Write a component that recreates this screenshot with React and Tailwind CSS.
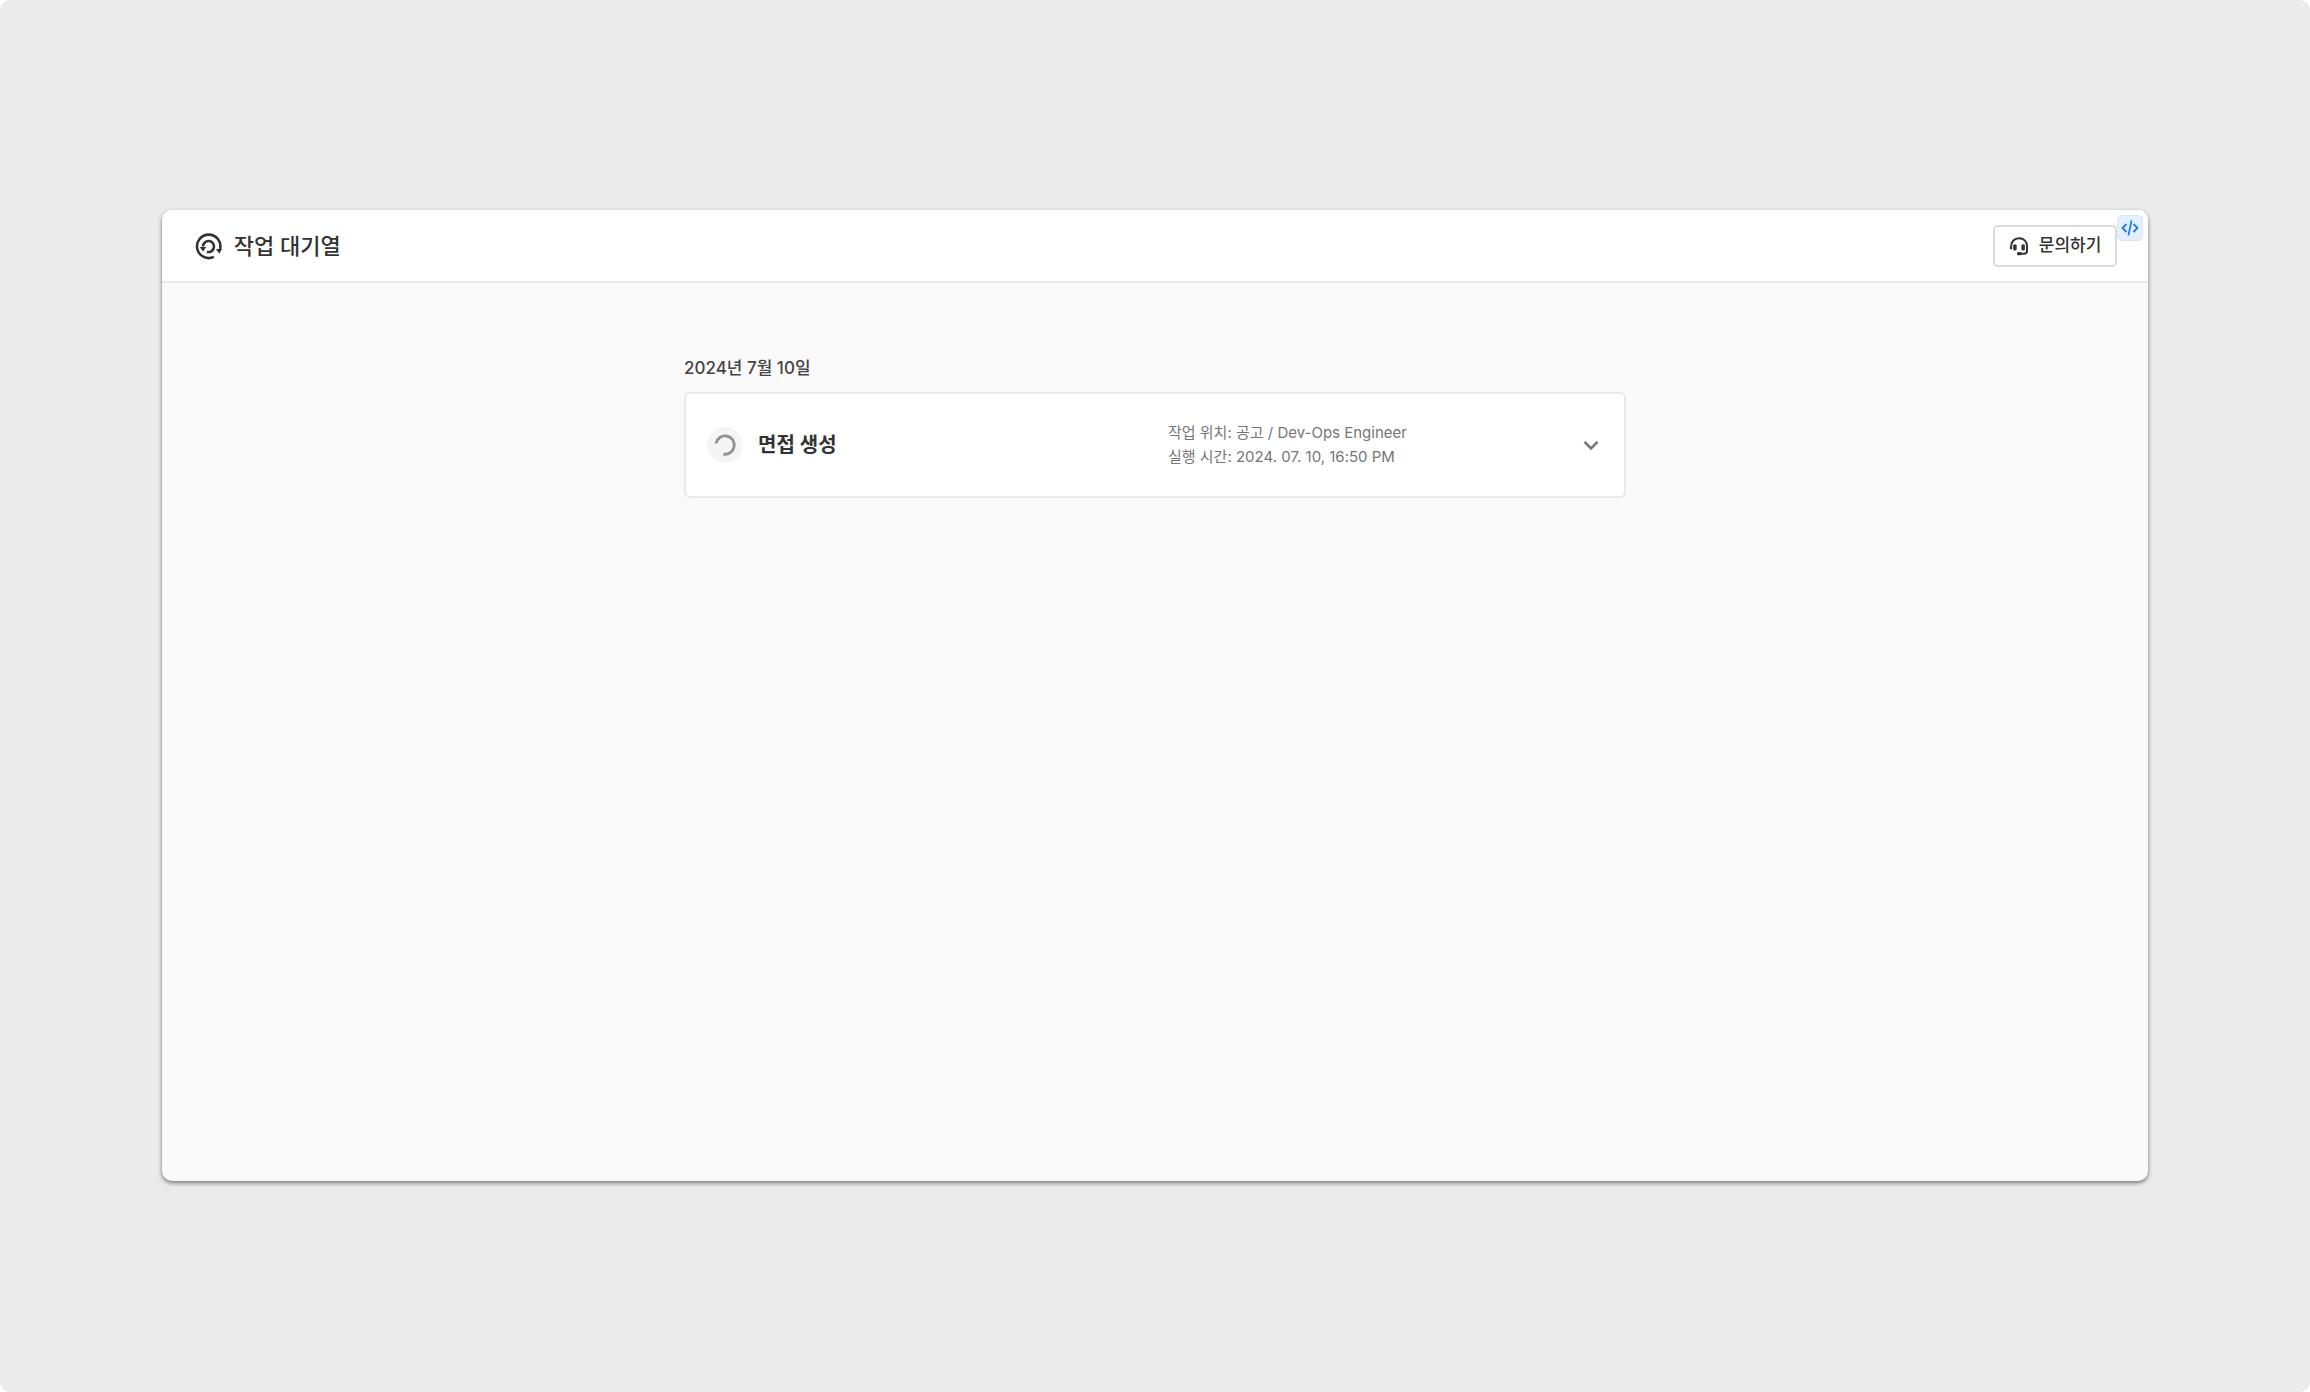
const FONT = "font-['Inter','Noto_Sans_CJK_KR',sans-serif]";

function QueueIcon() {
  return (
    <svg viewBox="0 0 28 28" className="size-7 text-[#333333]" fill="none" stroke="currentColor" strokeWidth="2.6" aria-hidden="true">
      <path d="M19.9 24.8A11.7 11.7 0 1 1 26.1 17" />
      <path d="M21.900 16.900H28L25.300 21.700Z" fill="currentColor" stroke="none" />
      <path d="M12.900 19.800A5.500 5.500 0 1 0 9 14.500" />
      <path d="M5.700 14.900H12.300L9 19.500Z" fill="currentColor" stroke="none" />
    </svg>
  );
}

function HeadsetIcon() {
  return (
    <svg viewBox="0 0 20 20" className="size-5 text-[#333333]" fill="none" stroke="currentColor" aria-hidden="true">
      <path d="M2.200 10.800C2 5.600 5.400 2.200 10 2.200C14.600 2.200 18 5.400 18 10V14.800C18 16.700 17 17.700 15 17.700H9.500" strokeWidth="2" />
      <path d="M2 10.200V13.200" strokeWidth="2.200" />
      <rect x="4.200" y="8.300" width="3.500" height="6.200" rx="1.500" fill="currentColor" stroke="none" />
      <rect x="12.400" y="8.300" width="3.500" height="6.200" rx="1.500" fill="currentColor" stroke="none" />
      <rect x="8" y="16" width="4.500" height="3.200" rx="1.200" fill="currentColor" stroke="none" />
    </svg>
  );
}

function CodeIcon() {
  return (
    <svg viewBox="0 0 20 20" className="size-5 shrink-0 text-[#1a7cf0]" fill="none" stroke="currentColor" strokeWidth="1.8" aria-hidden="true">
      <path d="M6.500 6L2.500 10L6.500 14M13.500 6L17.500 10L13.500 14M11.600 2.500L8.400 17.500" />
    </svg>
  );
}

function Spinner() {
  return (
    <span className="flex size-9 shrink-0 items-center justify-center rounded-full bg-[#f5f5f5]">
      <svg viewBox="0 0 24 24" className="size-6 text-[#929292]" fill="none" stroke="currentColor" strokeWidth="2.8" aria-hidden="true">
        <path d="M3 10.400A9.200 9.200 0 1 1 10.400 21.100" />
      </svg>
    </span>
  );
}

function JobCard({ title, location, time }) {
  return (
    <article className="grid grid-cols-2 items-center rounded-md border-2 border-[#e9e9e9] bg-white px-[21px] py-[27px]">
      <div className="flex items-center gap-[15px]">
        <Spinner />
        <h3 className="text-[20px] leading-7 font-semibold text-[#333333]">{title}</h3>
      </div>
      <div className="flex items-center justify-between pl-[13px]">
        <div className="text-[15px] leading-6 text-[#767676]">
          <p>작업 위치: {location}</p>
          <p>실행 시간: {time}</p>
        </div>
        <button type="button" aria-label="펼치기" className="flex h-7 w-6 items-center justify-center text-[#777777]">
          <svg viewBox="0 0 20 20" className="size-5 shrink-0" fill="none" stroke="currentColor" strokeWidth="2.6" aria-hidden="true">
            <path d="M3.500 6.800L10 13.300L16.500 6.800" />
          </svg>
        </button>
      </div>
    </article>
  );
}

export default function App() {
  return (
    <div className="bg-white">
      <div className={`flex min-h-screen flex-col rounded-[10px] bg-[#ebebeb] px-[7%] pt-[210px] pb-[211px] ${FONT}`}>
        <main className="flex flex-1 flex-col overflow-hidden rounded-[10px] bg-[#fafafa] shadow-[0_2px_4px_rgba(0,0,0,0.5)]">
          <header className="relative flex items-center justify-between border-b-2 border-[#e9e9e9] bg-white pt-[15px] pr-[31px] pb-3.5 pl-8">
            <div className="flex items-center gap-3">
              <QueueIcon />
              <h1 className="text-[22px] leading-8 font-medium text-[#333333]">작업 대기열</h1>
            </div>
            <button type="button" className="flex h-[42px] items-center gap-2.5 rounded-[5px] border-2 border-[#dadada] bg-white px-3.5 text-[17px] font-medium text-[#333333]">
              <HeadsetIcon />
              문의하기
            </button>
            <button type="button" aria-label="코드 보기" className="absolute top-[5px] right-[5px] flex size-[26px] items-center justify-center rounded-[5px] border border-[#d5e7fa] bg-[#e4f0fd]">
              <CodeIcon />
            </button>
          </header>
          <section className="mx-auto w-full max-w-[942px] pt-[71px]">
            <h2 className="mb-2.5 text-[17px] leading-7 font-medium text-[#444444]">2024년 7월 10일</h2>
            <JobCard title="면접 생성" location="공고 / Dev-Ops Engineer" time="2024. 07. 10, 16:50 PM" />
          </section>
        </main>
      </div>
    </div>
  );
}
